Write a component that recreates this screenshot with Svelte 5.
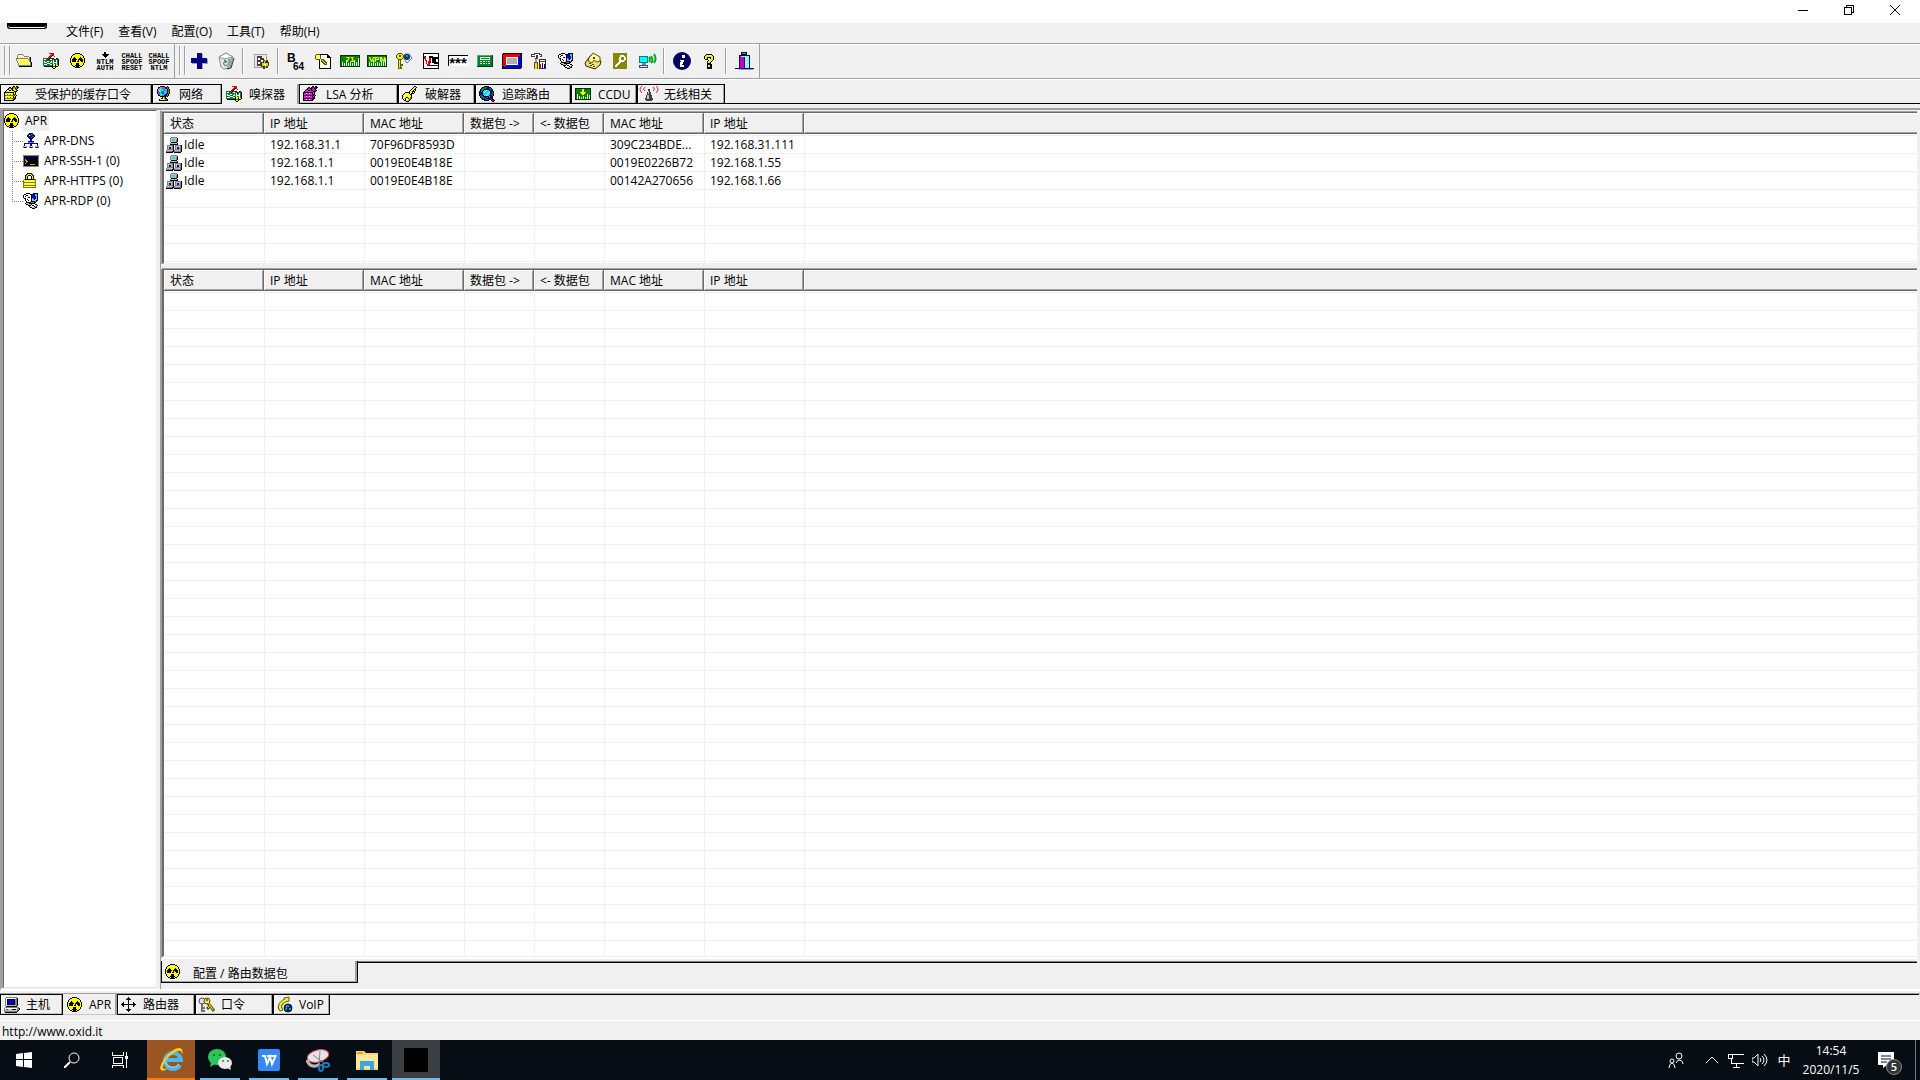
<script lang="ts">
  interface Tab {
    icon: string
    label: string
    width: number
    wide?: boolean
  }

  const menus = ['文件(F)', '查看(V)', '配置(O)', '工具(T)', '帮助(H)']

  const fileTools = ['folder', 'sniffer', 'apr', 'ntlm', 'reset', 'spoof']
  const mainTools = [
    ['plus', 'trash'],
    ['settings'],
    ['base64', 'scroll', 'hash', 'vpn', 'keys', 'vnc', 'stars', 'calc', 'rsa', 'hammer', 'rdp', 'phone', 'wpa', 'wireless'],
    ['info', 'help'],
    ['exit'],
  ]

  const tabs: Tab[] = [
    { icon: 'vault', label: '受保护的缓存口令', width: 152, wide: true },
    { icon: 'globe', label: '网络', width: 70 },
    { icon: 'sniffer', label: '嗅探器', width: 77 },
    { icon: 'lsa', label: 'LSA 分析', width: 99 },
    { icon: 'key', label: '破解器', width: 77 },
    { icon: 'trace', label: '追踪路由', width: 96 },
    { icon: 'ccdu', label: 'CCDU', width: 66 },
    { icon: 'antenna', label: '无线相关', width: 88 },
  ]

  const bottomTabs: Tab[] = [
    { icon: 'host', label: '主机', width: 63 },
    { icon: 'apr', label: 'APR', width: 54 },
    { icon: 'router', label: '路由器', width: 78 },
    { icon: 'passwords', label: '口令', width: 78 },
    { icon: 'voip', label: 'VoIP', width: 57 },
  ]

  const tree = [
    { icon: 'dns', label: 'APR-DNS' },
    { icon: 'ssh', label: 'APR-SSH-1 (0)' },
    { icon: 'lock', label: 'APR-HTTPS (0)' },
    { icon: 'rdp', label: 'APR-RDP (0)' },
  ]

  const columns = ['状态', 'IP 地址', 'MAC 地址', '数据包 ->', '<- 数据包', 'MAC 地址', 'IP 地址', '']

  const poisoned = [
    ['Idle', '192.168.31.1', '70F96DF8593D', '', '', '309C234BDE...', '192.168.31.111', ''],
    ['Idle', '192.168.1.1', '0019E0E4B18E', '', '', '0019E0226B72', '192.168.1.55', ''],
    ['Idle', '192.168.1.1', '0019E0E4B18E', '', '', '00142A270656', '192.168.1.66', ''],
  ]

  const apps = ['ie', 'wechat', 'wps', 'snip', 'explorer', 'cain']

  // one letter per pixel, see palette
  const palette: Record<string, string> = {
    k: '#000', y: '#ffff00', g: '#808080', s: '#c0c0c0', w: '#fff', c: '#00e0f0',
    b: '#0000c8', n: '#008030', r: '#e00000', o: '#808000', l: '#ffff90', d: '#303030', m: '#e020e0', p: '#700070',
  }

  const safe = [
    '.........kk.kk..',
    '.....kk.kooookk.',
    '....kookkoykok..',
    '...kkyyokyyok...',
    '..kyykkykkyyok..',
    '.kyyyyyyyykkk...',
    'kkkkkkkkkkyk....',
    'kyywyywyykyk....',
    'kyyoyyoyykok....',
    'koooooooookyk...',
    'kyywyywyykyk....',
    'kyyoyyoyykok....',
    'koooooooookk....',
    'kyywyywyykk.....',
    'kkkkkkkkkk......',
  ]

  const sprites: Record<string, string[]> = {
    apr: [
      '.....kkkkk......',
      '...kkyyyyykk....',
      '..kyyyyyyyyyk...',
      '.kyyyyyyyyyyyk..',
      '.kyykyyyyykyyk..',
      'kyykkkyyykkkyyk.',
      'kykkkkkykkkkkyk.',
      'kykkkkyykykkkyk.',
      'kykkkkykkyykkyk.',
      'kyyyyyyyyyyyyyk.',
      '.kyyyykkkyyyyk..',
      '.kyyyykkkyyyyk..',
      '..kyykkkkkyyk...',
      '...kkykkkykk....',
      '.....kkkkk......',
    ],
    idle: [
      '.....gggggg.....',
      '....gssssssk....',
      '....gscccsgk....',
      '....gscccsgk....',
      '....gsssssgk....',
      '.....kkkkkk.....',
      '....gssssssk....',
      '....kkkkkkkk....',
      '.ggggggk.ggggggk',
      '.gssssgk.gssssgk',
      '.gsbbsgk.gsbbsgk',
      '.gsbbsgk.gsbbsgk',
      '.ggggggk.ggggggk',
      'gsssssskgsssssgk',
      'ggggggkkgggggggk',
      'kkkkkkk.kkkkkkk.',
    ],
    dns: [
      '......kkkk......',
      '.....kbbnnk.....',
      '....kbwnbbbk....',
      '....kbbbbnnk....',
      '.....kbbnbk.....',
      '......kkkk......',
      '.......bb.......',
      '.......bb.......',
      '.....bbbbbb.....',
      '.....gggggg.....',
      '.bbbbbbbbbbbbbb.',
      '.b.....bb.....b.',
      '.b.....bb.....b.',
      'gssg..gssg..gssg',
      'gkkg..gkkg..gkkg',
    ],
    lock: [
      '....kkkkk.......',
      '...koyyyok......',
      '..koykkkyok.....',
      '..kyk...kyk.....',
      '..kyk...kyk.....',
      '..kyk...kyk.....',
      '.okkkkkkkkkko...',
      'oyyyyyyyyyyyo...',
      'oylllllllllyo...',
      'ooooooooooooo...',
      'oylllllllllyo...',
      'oyyyyyyyyyyyo...',
      'ooooooooooooo...',
      'oylllllllllyo...',
      'ooooooooooooo...',
    ],
    rdp: [
      '...kkkk...kkkkk.',
      '.kkwwwwkkkbbcck.',
      'kwwkkwwwkbbbcck.',
      'kwkwwwwwkbbbbck.',
      'kwwwwkkwkbbbbck.',
      '.kkwwwwwkcbbbsk.',
      '..kwkwwwkscbssk.',
      '..kwwkwwksssskk.',
      '...kwwwskkkkgk..',
      '...kkkkkgggkk...',
      '..kssskkkkkk....',
      '...kkssskwwwkk..',
      '.....kkkwkkwwsk.',
      '......kswwwksk..',
      '.......kkssskk..',
      '.........kkk....',
    ],
    host: [
      '..ggggggggggg...',
      '.gwwwwwwwwwwgk..',
      '.gwkkkkkkkkggk..',
      '.gwkbbbbbbkggk..',
      '.gwkbbbbbbkggk..',
      '.gwkbbbbbbkggk..',
      '.gwkbbbbbbkggk..',
      '.gwkkkkkkkkggk..',
      '.gssssssssssgk..',
      '..kkkkkkkkkkk...',
      '.gggggggggggggg.',
      'gwwwwwwwwwwwwggk',
      'gsnnsssskkkksggk',
      'gssssssssssssgk.',
      'gggggggggggggk..',
      '.kkkkkkkkkkkk...',
    ],
    sniffer: [
      '......rrrrr.....',
      '........rrr.....',
      '.......rrkr.....',
      '......rrk..r....',
      '.....rrk........',
      'nnnnrrknnkk..kk.',
      'nwwnrknwwnnknnnk',
      'nnnnnnnnnnwknwnk',
      'nwnnwwnnwnwnnwnk',
      'nwwwnnnwwnwwwwnk',
      'nnnnwwwnnnwnnwnk',
      'nwwwnnnwwkyynynk',
      'nnnnnnnnnkyykyyk',
      '.kkkkkkkkknnkkk.',
      '.........kyyk...',
      '..........kk....',
    ],
    folder: [
      '................',
      '..ggggg.........',
      '.glwlwlg........',
      '.gwlwlwlggggg...',
      '.glwlwlwlwlwlgk.',
      'gggggggggggglgk.',
      'glllllllllllggk.',
      'gwylylylylylwgk.',
      '.glylylylylylgk.',
      '.gwylylylylylwgk',
      '..glylylylylylgk',
      '..gwylylylylylgk',
      '..gggggggggggggk',
      '...kkkkkkkkkkkkk',
    ],
    vault: safe,
    lsa: safe.map((line) => line.replaceAll('y', 'm').replaceAll('o', 'p')),
    router: [
      '.......k........',
      '......kkk.......',
      '.....kkkkk......',
      '.......k........',
      '.......k........',
      '..k....k....k...',
      '.kk....k....kk..',
      'kkkkkkkkkkkkkkk.',
      '.kk....k....kk..',
      '..k....k....k...',
      '.......k........',
      '.......k........',
      '.....kkkkk......',
      '......kkk.......',
      '.......k........',
    ],
    key: [
      '............kk..',
      '...........kyyk.',
      '..........kylk..',
      '.........kyykk..',
      '........kylkyk..',
      '.......kyykkk...',
      '...kkkkkylkyk...',
      '..kyyyykykkk....',
      '.kylllyykk......',
      'kyllyyyyyk......',
      'kylyyyyyyk......',
      'kyyykkyyok......',
      'kyykwwkyok......',
      '.kykwwyok.......',
      '..kkyyok........',
      '....kkk.........',
    ],
    trace: [
      '.....kkkkk......',
      '...kknnnbbkk....',
      '..knnnnbbbnnk...',
      '.knnnkkkkkbnnk..',
      '.knnkccwcckbbk..',
      'kbnkccwcccckbbk.',
      'kbbkcwccccwkbnk.',
      'kbbkcccccwckbnk.',
      'kbbkccccwcckbnk.',
      'knnbkccwcckbbnk.',
      '.knnbkkkkkcbbk..',
      '.knnnbbnnkrkbk..',
      '..kbnnnbbbkrkk..',
      '...kkbbnnbbkrkk.',
      '.....kkkkk..krrk',
      '.............kk.',
    ],
    globe: [
      '....kkkkk..k....',
      '..kkccmmmkkok...',
      '..kcccmmcbkok...',
      '.kccwccmmcckok..',
      '.kcwccccmmckok..',
      '.kmcccnncccbok..',
      '.kmmcnnncccbok..',
      '.kmmccnnccbbok..',
      '..kmccccmbbok...',
      '..kkccmmbbkok...',
      '....kkkkkkok....',
      '......kyok......',
      '.....kkyokk.....',
      '...kyyyyyook....',
      '...kkkkkkkkk....',
    ],
  }

  let activeTab = $state('sniffer')
  let activeBottom = $state('apr')
</script>

{#snippet icon(name: string)}
  <svg class="icon" viewBox="0 0 16 16" width="16" height="16" aria-hidden="true">
    {#if sprites[name]}
      {#each sprites[name] as line, y (y)}
        {#each line as dot, x (x)}
          {#if dot !== '.'}<rect {x} {y} width="1" height="1" fill={palette[dot]} />{/if}
        {/each}
      {/each}
    {:else if name === 'ntlm'}
      <path d="M7-1h2v2h3L8 5 4 1h3z" fill="#000" />
      <text class="tiny" x="8" y="11">NTLM</text>
      <text class="tiny" x="8" y="17">AUTH</text>
    {:else if name === 'reset' || name === 'spoof'}
      <text class="tiny" x="8" y="5">CHALL</text>
      <text class="tiny" x="8" y="11">SPOOF</text>
      <text class="tiny" x="8" y="17">{name === 'reset' ? 'RESET' : 'NTLM'}</text>
    {:else if name === 'plus'}
      <path d="M7 1h5v5h5v5h-5v5H7v-5H1V8h6z" fill="#a0a0a0" />
      <path d="M6 0h5v5h5v5h-5v6H6v-6H0V5h6z" fill="#000080" />
    {:else if name === 'trash'}
      <g class="soft">
        <path d="M1 4l7-4 7 4-3 11-6 1-3-2z" fill="#e4e4e4" stroke="#909090" />
        <path d="M1 4l5 2 9-2-7-4z" fill="#fff" stroke="#909090" />
        <path d="M10 6l4-1-2 9-3 1z" fill="#a0a0a0" />
        <path d="M9 9a2 2 0 1 0 0 3M6 7l2 1-1 2" fill="none" stroke="#008030" />
        <path d="M16 5l-3 10-4 1" fill="none" stroke="#303030" />
      </g>
    {:else if name === 'settings'}
      <path d="M1 1h12v13H1z" fill="#e8e8e8" stroke="#a0a0a0" />
      <path d="M4 3h5v2h2v3h2v3H9v2H4z" fill="#404040" />
      <path d="M5 5h2v2H5zM8 7h2v2H8zM5 9h2v2H5z" fill="#fff" />
      <path d="M8 9h2V7h2v2h1V7h2v2h1v4h-1v2h-2v-1h-1v2h-2v-2H8z" fill="#403800" />
      <path d="M9 10h2V8h1v2h3v3h-2v1h-1v-1H9z" fill="#e8d800" />
      <path d="M11 11h2v1h-2z" fill="#fff" />
    {:else if name === 'base64'}
      <text class="bee" x="-1" y="9">B</text>
      <text class="sixty" x="5" y="17">64</text>
    {:else if name === 'scroll'}
      <path d="M4 1h9v1h1v1h1v1h1v12H4z" fill="#000" />
      <path d="M5 2h7v3h3v10H5z" fill="#fff" />
      <path d="M6 6h2v1h1v1h1v1h1v2H9v-1H8V9H7V8H6z" fill="#e8e000" stroke="#605800" />
      <path d="M1 1h4v1h1v4H5v1H1V6H0V2h1z" fill="#605800" />
      <path d="M1 2h4v4H1z" fill="#ffff60" />
    {:else if name === 'hash' || name === 'vpn'}
      <path d="M-2 2h20v12H-2z" fill="#008000" />
      <path d="M-2 2h20v1H-2zM-2 13h20v1H-2zM-2 2h1v12h-1zM17 2h1v12h-1z" fill="#003800" />
      <path d="M0 9h1v4H0zM2 10h1v3H2zM4 7h1v6H4zM6 10h1v3H6zM8 9h1v4H8zM10 10h1v3h-1zM12 7h1v6h-1zM14 9h1v4h-1zM16 5h1v8h-1z" fill="#e0ffe0" />
      <text class="label" x="8" y="9">{name === 'vpn' ? 'VPN' : '71'}</text>
    {:else if name === 'keys'}
      <path d="M2 7h3v9H2zM5 11h2v2H5zM5 14h1v2H5z" fill="#606000" />
      <path d="M3 6h1v9H3z" fill="#f0e800" />
      <path d="M2 0h4v1h1v1h1v3H7v1H6v1H2V6H1V5H0V2h1V1h1z" fill="#505000" />
      <path d="M2 1h4v1h1v3H6v1H2V5H1V2h1z" fill="#f0f000" />
      <path d="M3 2h2v2H3z" fill="#505000" />
      <g class="soft">
        <path d="M9 1h4l3 4-5 5-3-4z" fill="#f4f4f4" stroke="#707070" />
        <circle cx="11" cy="4" r="3" fill="#003098" />
        <path d="M10 2h2v2h-2z" fill="#30a040" />
      </g>
    {:else if name === 'vnc'}
      <path d="M0 0h16v16H0z" fill="#000" />
      <path d="M1 1h14v14H1z" fill="#fff" />
      <path d="M6 3h4v1h1v6H9V5H8v5H6zM11 4h4v2h-2v3h2v2h-4z" fill="#000" />
      <path d="M1 3h2v4h1v4h1V8h1V5h2v4H7v4H4v-2H3V8H2V6H1z" fill="#e00000" />
      <path d="M6 12h9v1H6z" fill="#000080" />
    {:else if name === 'stars'}
      <path d="M-2 2h20v11H-2z" fill="#fff" />
      <path d="M-2 2h20v1H-1v10h-1z" fill="#000" />
      <text class="stars" x="8" y="15">***</text>
    {:else if name === 'calc'}
      <path d="M0 2h16v12H0z" fill="#003818" />
      <path d="M0 2h15v11H0z" fill="#50b070" />
      <path d="M1 3h14v10H1z" fill="#008030" />
      <path d="M3 4h10v3H3z" fill="#e0ffe0" />
      <path d="M4 5h8v1H4z" fill="#008030" />
      <path d="M3 8h2v1H3zM6 8h2v1H6zM9 8h1v1H9zM11 8h2v1h-2zM3 10h2v1H3zM6 10h2v1H6zM9 10h1v1H9zM11 10h2v1h-2z" fill="#e0e8c0" />
    {:else if name === 'rsa'}
      <rect x="-2" y="0" width="20" height="16" rx="2" fill="#000" />
      <path d="M-1 13V2h1V1h16v1l-2 2H3v7l-3 3z" fill="#f00000" />
      <path d="M17 2v12h-1v1H0v-1l3-3h10V4z" fill="#0000e0" />
      <path d="M2 4h12v8H2z" fill="#fff" />
      <path d="M3 5h10v6H3z" fill="#b0b0b0" />
    {:else if name === 'hammer'}
      <path d="M0 1h3V0h6v1h2v3H9V3H7v3H4V4H0z" fill="#404040" />
      <path d="M1 2h3V1h4v1h2v1H7V2H5v3H4V3H1z" fill="#f0f0f0" />
      <path d="M4 6h2v3H4z" fill="#a0a0a0" />
      <path d="M3 9h4v7H3z" fill="#605800" />
      <path d="M4 10h2v6H4z" fill="#f0e000" />
      <path d="M8 6h7v10H8z" fill="#303030" />
      <path d="M9 7h5v8H9z" fill="#fff" />
      <path d="M9 8h5v1H9zM9 11h1v4H9z" fill="#d00000" />
      <path d="M11 10h1v5h-1zM13 11h1v4h-1z" fill="#000080" />
    {:else if name === 'phone'}
      <g class="soft">
        <path d="M0 10l6-8 10 6-1 4-5 4-9-3z" fill="#e8e070" stroke="#302800" />
        <path d="M4 5l4-5 7 4v4l-3 1-3-2-2 3-4-2z" fill="#fffca0" stroke="#605800" />
        <path d="M4 10h2v1H4zM7 11h2v1H7zM5 12h2v1H5zM8 13h2v1H8zM8 4h2v2H8z" fill="#504800" />
      </g>
    {:else if name === 'wpa'}
      <path d="M1 0h14v16H1z" fill="#888800" />
      <path d="M8 2h4v1h1v1h1v3h-1v1h-1v1H9v1H8v1H7v1H6v1H5v1H3v-2h1v-1h1v-1h1V9h1V4h1zM9 4v3h3V4z" fill="#fff" fill-rule="evenodd" />
    {:else if name === 'wireless'}
      <path d="M0 3h9v7H0z" fill="#008080" />
      <path d="M1 4h7v5H1z" fill="#00ffff" />
      <path d="M3 10h4v2H3z" fill="#8080b0" />
      <path d="M0 12h9v3H0z" fill="#4040a0" />
      <path d="M1 13h7v1H1z" fill="#e8e8ff" />
      <path class="soft" d="M10 4q2 2 0 5M12 3q3 4 0 7M15 1q3 5 0 9" fill="none" stroke="#00a820" stroke-width="2" />
    {:else if name === 'info'}
      <circle class="soft" cx="8" cy="8" r="9" fill="#000060" />
      <path d="M8 2h3v3H8zM6 7h4v1L8 12h2v1l-1 1H6v-3l1-3H5z" fill="#fff" />
    {:else if name === 'help'}
      <path d="M5 1h6v1h1v1h1v4h-1v1h-1v1h-1v2h1v5H6V8h1V7h2V5H7v2H4V6H3V3h1V2h1z" fill="#000" />
      <path d="M5 2h6v1h1v4h-1v1h-1v1H9v1H7V8h1V7h1V6h1V4H6v2H4V3h1zM7 12h2v2H7z" fill="#f0f000" />
    {:else if name === 'exit'}
      <path d="M-1 15h4V2h11v13h4v1H-1z" fill="#000080" />
      <path d="M4 3h9v12H4z" fill="#80ffff" />
      <path d="M4 3l5 2v9l-5 2z" fill="#c000c0" />
      <path d="M8 4h1v11H8z" fill="#500050" />
      <path d="M10 5h1v1h-1zM12 7h1v1h-1zM10 9h1v1h-1zM12 11h1v1h-1z" fill="#fff" />
      <path d="M5-1h6v3H5z" fill="#000" />
      <path d="M6 0h4v1H6z" fill="#00d040" />
      <path d="M3 16h14v1H3z" fill="#a0a0a0" />
    {:else if name === 'ccdu'}
      <path d="M0 2h16v12H0z" fill="#003000" />
      <path d="M1 3h14v10H1z" fill="#008000" />
      <path d="M2 8h1v5H2zM4 10h1v3H4zM6 11h1v2H6zM8 10h1v3H8zM10 11h1v2h-1zM12 8h1v5h-1zM14 9h1v4h-1z" fill="#e0ffe0" />
      <path d="M7 3h2v3h2v1h-1v1H9v1H7V8H6V7H5V6h2z" fill="#ffff00" />
    {:else if name === 'antenna'}
      <path d="M7 3h2v3h1v3h1v3h1v2h-1v1H5v-1H4v-2h1V9h1V6h1z" fill="#404040" />
      <path d="M7 5h1v3H7zM6 9h2v4H6z" fill="#c8c8c8" />
      <path class="soft" d="M4 1q-3 2 0 4M1 0q-4 3 0 7M12 1q3 2 0 4M15 0q4 3 0 7" fill="none" stroke="#e02020" />
    {:else if name === 'ssh'}
      <path d="M0 2h16v12H0z" fill="#808080" />
      <path d="M1 3h14v10H1z" fill="#000" />
      <path d="M1 3h14v1H1z" fill="#000080" />
      <path d="M2 6h1v1h1v1h1v1H4v1H3v1H2v-1h1V8H2zM7 11h5v1H7z" fill="#c0b000" />
    {:else if name === 'passwords'}
      <g class="soft">
        <path d="M3 6v9M3 11h3M3 14h3" stroke="#707070" stroke-width="2" />
        <circle cx="3" cy="4" r="3" fill="#e0e0e0" stroke="#505050" />
        <path d="M9 6l6 8M11 9l-3 3" stroke="#605800" stroke-width="3" />
        <circle cx="8" cy="4" r="3" fill="#f0e840" stroke="#504800" />
        <path d="M9 5l5 8M11 9l-2 2" stroke="#f0e840" />
        <circle cx="8" cy="3" r="1" fill="#504800" />
      </g>
    {:else if name === 'voip'}
      <g class="soft">
        <path d="M3 12Q2 6 9 3" fill="none" stroke="#606000" stroke-width="4" />
        <path d="M1 10l3-1 2 4-3 1zM7 1l5-1v4l-3 1z" fill="#f0f040" stroke="#606000" />
        <path d="M3 11Q2 6 9 3" fill="none" stroke="#f0f040" stroke-width="2" />
        <circle cx="11" cy="11" r="4" fill="#0020a0" stroke="#001040" />
        <path d="M9 8h3v2h-2v3H8zM12 11h2v2h-2z" fill="#20a040" />
      </g>
    {/if}
  </svg>
{/snippet}

{#snippet tab(item: Tab, active: boolean, pick: () => void)}
  <button class="tab" class:active class:wide={item.wide} style:width="{item.width}px" role="tab" aria-selected={active} onclick={pick}>
    {@render icon(item.icon)}
    <span>{item.label}</span>
  </button>
{/snippet}

{#snippet grid(rows: string[][])}
  <div class="grid">
    <table>
      <colgroup>
        <col class="c100" /><col class="c100" /><col class="c100" /><col class="c70" /><col class="c70" /><col class="c100" /><col class="c100" /><col />
      </colgroup>
      <thead>
        <tr>
          {#each columns as title, n (n)}<th><div class="head">{title}</div></th>{/each}
        </tr>
      </thead>
      <tbody>
        {#each rows as row, r (r)}
          <tr class="row">
            {#each row as cell, c (c)}
              <td>
                {#if c === 0}<div class="state">{@render icon('idle')}{cell}</div>{:else}{cell}{/if}
              </td>
            {/each}
          </tr>
        {/each}
        <tr class="rest">
          {#each columns as _, n (n)}<td></td>{/each}
        </tr>
      </tbody>
    </table>
  </div>
{/snippet}

<div class="window">
  <header class="titlebar">
    <button aria-label="最小化"><svg viewBox="0 0 10 10" width="10" height="10"><path d="M0 5h10v1H0z" fill="#000" /></svg></button>
    <button aria-label="还原">
      <svg viewBox="0 0 10 10" width="10" height="10"><path d="M0 2h8v8H0zM1 3v6h6V3zM2 0h8v8H8V7h1V1H3v1H2z" fill="#000" fill-rule="evenodd" /></svg>
    </button>
    <button aria-label="关闭"><svg viewBox="0 0 10 10" width="10" height="10"><path d="M0 0l10 10M10 0L0 10" stroke="#000" /></svg></button>
  </header>

  <nav class="menubar">
    <div class="badge"></div>
    {#each menus as menu (menu)}<button>{menu}</button>{/each}
  </nav>

  <div class="toolbars">
    <div class="toolbar">
      <span class="grip"></span>
      {#each fileTools as name (name)}<button class="tool" aria-label={name}>{@render icon(name)}</button>{/each}
    </div>
    <div class="toolbar">
      <span class="grip"></span>
      {#each mainTools as group, g (g)}
        {#if g > 0}<span class="sep"></span>{/if}
        {#each group as name (name)}<button class="tool" aria-label={name}>{@render icon(name)}</button>{/each}
      {/each}
    </div>
  </div>

  <div class="tabs top" role="tablist">
    {#each tabs as item (item.icon)}{@render tab(item, activeTab === item.icon, () => (activeTab = item.icon))}{/each}
    <span class="tail"></span>
  </div>

  <main>
    <aside>
      <div class="root">{@render icon('apr')}<span>APR</span></div>
      <ul>
        {#each tree as node (node.label)}
          <li>{@render icon(node.icon)}<span>{node.label}</span></li>
        {/each}
      </ul>
    </aside>
    <section class="panel">
      <div class="upper">{@render grid(poisoned)}</div>
      <div class="lower">{@render grid([])}</div>
      <div class="tabs sheet">
        <button class="tab active">{@render icon('apr')}<span>配置 / 路由数据包</span></button>
        <span class="tail"></span>
      </div>
    </section>
  </main>

  <div class="tabs bottom" role="tablist">
    {#each bottomTabs as item (item.icon)}{@render tab(item, activeBottom === item.icon, () => (activeBottom = item.icon))}{/each}
    <span class="tail"></span>
  </div>

  <footer class="status">http://www.oxid.it</footer>

  <div class="taskbar">
    <button class="sys" aria-label="开始">
      <svg viewBox="0 0 16 16" width="16" height="16"><path d="M0 2l7-1v6H0zM8 1l8-1v7H8zM0 8h7v7l-7-1zM8 8h8v8l-8-1z" fill="#fff" /></svg>
    </button>
    <button class="sys" aria-label="搜索">
      <svg viewBox="0 0 16 16" width="16" height="16"><circle cx="10" cy="6" r="5" fill="none" stroke="#fff" /><path d="M6 10l-6 6" stroke="#fff" stroke-width="2" /></svg>
    </button>
    <button class="sys" aria-label="任务视图">
      <svg viewBox="0 0 16 16" width="16" height="16" shape-rendering="crispEdges"><path d="M0 0v3h11V0M1 5h9v6H1zM0 16v-3h11v3M14 0v16" fill="none" stroke="#fff" /><path d="M13 4h3v3h-3z" fill="#fff" /></svg>
    </button>
    {#each apps as app (app)}
      <button class="app {app}" aria-label={app}>
        <svg viewBox="0 0 24 24" width="24" height="24">
          {#if app === 'ie'}
            <path d="M21 17a8 8 0 1 1 1-5H8" fill="none" stroke="#49b9ee" stroke-width="4" />
            <path d="M20 16a8 8 0 0 1-14-2" fill="none" stroke="#a5e2fa" />
            <path d="M2 22C-2 18 12 0 20 0q5 0 3 7 0-5-4-4C12 5 3 15 4 20q1 2 5 0-4 4-7 2z" fill="#ffcc28" />
          {:else if app === 'wechat'}
            <ellipse cx="9" cy="9" rx="9" ry="8" fill="#2dc45c" />
            <path d="M3 14l-1 5 5-3z" fill="#2dc45c" />
            <ellipse cx="17" cy="15" rx="7" ry="6" fill="#ececec" />
            <path d="M19 20l4 2-1-4z" fill="#ececec" />
            <circle cx="6" cy="7" r="1" fill="#145c2c" /><circle cx="12" cy="7" r="1" fill="#145c2c" />
            <circle cx="15" cy="13" r="1" fill="#666" /><circle cx="20" cy="13" r="1" fill="#666" />
          {:else if app === 'wps'}
            <rect x="1" y="1" width="22" height="22" rx="2" fill="#3389f6" />
            <path d="M5 8h3l2 8 3-7 2 7 4-9M10 8h9" fill="none" stroke="#fff" stroke-width="2" />
          {:else if app === 'snip'}
            <ellipse cx="12" cy="8" rx="11" ry="6" fill="#e4e4e8" stroke="#d84848" transform="rotate(-14 12 8)" />
            <path d="M1 12q2 7 9 6l4-2" fill="none" stroke="#b8b8bc" stroke-width="3" />
            <path d="M7 7l11 8M14 3l-1 13" stroke="#888" />
            <ellipse cx="15" cy="20" rx="2" ry="3" fill="none" stroke="#2078b8" stroke-width="2" />
            <ellipse cx="20" cy="17" rx="3" ry="2" fill="none" stroke="#2078b8" stroke-width="2" />
          {:else if app === 'explorer'}
            <path d="M1 3h8l2 2h12v17H1z" fill="#f8d775" />
            <path d="M1 7h22v13H1z" fill="#ffe79a" />
            <path d="M2 4h6v2H2z" fill="#e0a830" />
            <path d="M5 13h14v9h-4v-4H9v4H5z" fill="#3aa5e0" />
          {:else}
            <path d="M0 0h24v24H0z" fill="#000" />
          {/if}
        </svg>
      </button>
    {/each}
    <div class="tray">
      <button class="people" aria-label="人脉">
        <svg viewBox="0 0 16 16" width="16" height="16"><circle cx="11" cy="4" r="3" /><circle cx="4" cy="9" r="2" /><path d="M1 16q0-4 3-5 3 1 3 5M8 11q2-4 4-3 3 1 3 4" /></svg>
      </button>
      <button aria-label="显示隐藏的图标"><svg viewBox="0 0 16 16" width="16" height="16"><path d="M2 11l6-6 6 6" /></svg></button>
      <button aria-label="网络">
        <svg viewBox="0 0 16 16" width="16" height="16" shape-rendering="crispEdges"><path d="M4 2h12v9H3V7M0 2h4v4H0zM8 11v4M5 15h7" /></svg>
      </button>
      <button aria-label="音量"><svg viewBox="0 0 16 16" width="16" height="16"><path d="M0 6h2l4-4v12l-4-4H0zM8 6q2 2 0 4M10 4q4 4 0 8M12 2q6 6 0 12" /></svg></button>
      <button class="ime" aria-label="输入法">中</button>
      <button class="clock"><span>14:54</span><span>2020/11/5</span></button>
      <button class="notes" aria-label="通知">
        <svg viewBox="0 0 16 16" width="16" height="16"><path d="M0 0h16v13H9l-4 3v-3H0z" class="solid" /><path d="M3 4h10M3 7h10M3 10h6" class="dark" /></svg>
        <span class="count">5</span>
      </button>
      <span class="desktop"></span>
    </div>
  </div>
</div>

<style>
  :global(body) { background: #f0f0f0; }
  * { box-sizing: border-box; }
  button { margin: 0; padding: 0; border: 0; background: transparent; font: inherit; color: inherit; white-space: nowrap; }

  .window { display: flex; flex-direction: column; height: 100vh; background: #f0f0f0; color: #000; font: 12px/16px "Open Sans", "Noto Sans CJK SC", sans-serif; overflow: hidden; }
  .icon { flex: none; display: block; overflow: visible; shape-rendering: crispEdges; }
  .soft { shape-rendering: geometricPrecision; }
  .tiny { font: bold 7px "Liberation Mono", monospace; text-anchor: middle; }
  .label { font: bold 8px "Liberation Sans", sans-serif; text-anchor: middle; fill: #ffff40; }
  .stars { font: bold 15px "Liberation Sans", sans-serif; text-anchor: middle; }
  .bee { font: bold 12px "Liberation Sans", sans-serif; }
  .sixty { font: bold 10px "Liberation Sans", sans-serif; }

  .titlebar { flex: none; display: flex; justify-content: flex-end; height: 23px; padding: 0 2px 3px 0; background: #fff; }
  .titlebar button { display: flex; align-items: center; justify-content: center; width: 46px; }

  .menubar { flex: none; display: flex; align-items: center; height: 20px; gap: 15px; padding: 0 0 2px 7px; }
  .badge { align-self: flex-start; width: 40px; height: 6px; margin-right: 4px; border: 1px solid #000; border-top: 0; border-radius: 0 0 3px 3px; background: #000; box-shadow: inset 0 -1px #fff; }

  .toolbars { flex: none; display: flex; height: 37px; border-top: 1px solid #a0a0a0; border-bottom: 1px solid #fff; box-shadow: inset 0 1px #fff, inset 0 -1px #a0a0a0; }
  .toolbar { display: flex; align-items: center; padding: 0 2px 2px 4px; border-right: 1px solid #a0a0a0; }
  .grip { width: 6px; height: 29px; border: 1px solid #a0a0a0; border-width: 0 1px; box-shadow: inset 1px 0 #fff, 1px 0 #fff; }
  .tool { display: flex; align-items: center; justify-content: center; width: 27px; height: 32px; }
  .sep { width: 8px; height: 26px; background: linear-gradient(90deg, transparent 3px, #a0a0a0 3px 4px, #fff 4px 5px, transparent 5px); }

  .tabs { flex: none; display: flex; height: 20px; }
  .tab { display: flex; align-items: center; gap: 7px; padding-left: 3px; border: 1px solid #000; box-shadow: inset -1px 0 #a0a0a0, inset 1px 0 #fff, inset 0 -1px #c8c8c8; }
  .tab.wide { gap: 15px; }
  .tail { flex: 1; }
  .top { margin-top: 4px; }
  .top .tab span { padding-top: 2px; }
  .top .tail { border-bottom: 1px solid #000; }
  .top .active { padding-left: 4px; border: 0; border-right: 2px solid #a0a0a0; box-shadow: none; }
  .bottom { height: 22px; padding-right: 1px; border-top: 1px solid #a0a0a0; }
  .bottom .tab { gap: 6px; }
  .bottom .tail { border-top: 1px solid #000; }
  .bottom .active { padding-left: 4px; border: 0; border-right: 2px solid #a0a0a0; box-shadow: inset 0 -1px #c8c8c8; }

  main { flex: 1; display: flex; min-height: 0; margin: 4px 0 2px; border-top: 2px solid #a0a0a0; border-left: 1px solid #a0a0a0; border-bottom: 2px solid #fff; }
  aside { flex: none; width: 154px; margin-bottom: 1px; border: 1px solid #696969; border-left: 1px solid #696969; border-right-color: #f0f0f0; border-bottom-color: #e3e3e3; box-shadow: -2px 0 #a0a0a0; margin-left: 2px; background: #fff; }
  .root { display: flex; align-items: center; height: 20px; gap: 3px; }
  .root span { padding: 2px; background: #f0f0f0; }
  ul { margin: 0 0 0 8px; padding: 0; list-style: none; }
  li { display: flex; align-items: center; height: 20px; gap: 5px; padding-left: 11px; background: repeating-linear-gradient(#808080 0 1px, transparent 1px 2px) 0 0 / 1px 100% no-repeat, repeating-linear-gradient(90deg, #808080 0 1px, transparent 1px 2px) 0 10px / 11px 1px no-repeat; }
  li:last-child { background-size: 1px 10px, 11px 1px; }

  .panel { flex: 1; display: flex; flex-direction: column; min-width: 0; margin-left: 3px; padding: 1px 3px 0 0; border-left: 1px solid #a0a0a0; }
  .upper, .lower { display: flex; border-left: 1px solid #a0a0a0; }
  .upper { flex: none; height: 153px; border-top: 1px solid #a0a0a0; }
  .lower { flex: 1; min-height: 0; margin-top: 5px; border-bottom: 2px solid #fff; }
  .grid { flex: 1; min-width: 0; border: 1px solid #696969; border-right: 0; border-bottom: 1px solid #f0f0f0; border-left: 2px solid #696969; box-shadow: 0 -1px #a0a0a0; background: repeating-linear-gradient(#f0f0f0 0 1px, #fff 1px 18px) 0 22px no-repeat #fff; overflow: hidden; }
  table { width: 100%; height: 100%; border-collapse: collapse; table-layout: fixed; }
  .c100 { width: 100px; }
  .c70 { width: 70px; }
  th { height: 22px; padding: 0; font-weight: 400; text-align: left; vertical-align: top; }
  .head { height: 21px; padding: 3px 6px 0; line-height: 16px; background: #f0f0f0; box-shadow: inset -1px -1px #696969, inset 1px 1px #fff, inset -2px -2px #a0a0a0; white-space: nowrap; }
  th:last-child .head { box-shadow: inset 0 -1px #696969, inset 1px 1px #fff, inset 0 -2px #a0a0a0; }
  td { padding: 1px 6px 0; box-shadow: inset 1px 0 #f0f0f0; white-space: nowrap; overflow: hidden; }
  td:first-child { padding-left: 2px; box-shadow: none; }
  .row td { height: 18px; }
  .state { display: flex; align-items: center; gap: 2px; height: 17px; }

  .sheet { height: 28px; margin-top: 2px; align-items: flex-start; }
  .sheet .tab { width: 197px; height: 22px; gap: 12px; border-width: 0 1px 1px; box-shadow: inset -2px 0 #a0a0a0, inset 0 -1px #a0a0a0; }
  .sheet .tab span { padding-top: 4px; }
  .sheet .tail { height: 2px; border-top: 1px solid #808080; box-shadow: inset 0 1px #000; }

  .status { flex: none; height: 20px; margin-top: 5px; padding: 3px 2px 0; border-top: 1px solid #fff; line-height: 16px; }

  .taskbar { flex: none; display: flex; height: 40px; background: #060d15; color: #fff; }
  .taskbar button { display: flex; align-items: center; justify-content: center; }
  .sys { width: 48px; }
  .sys:nth-child(3) { margin-right: 3px; }
  .app { width: 49px; background: linear-gradient(#76b9ed, #76b9ed) center bottom / 40px 2px no-repeat; }
  .app.ie { width: 48px; background: linear-gradient(#ff7a10, #ff7a10) center bottom / 100% 2px no-repeat #9b5523; }
  .app.cain { width: 48px; margin-left: 1px; background: linear-gradient(#76b9ed, #76b9ed) center bottom / 100% 2px no-repeat #3b3e43; }
  .tray { display: flex; margin-left: auto; }
  .tray button { width: 24px; }
  .tray svg { fill: none; stroke: #fff; }
  .tray .people { margin-right: 12px; }
  .tray .ime { font-size: 13px; }
  .tray .clock { flex-direction: column; gap: 3px; width: 70px; }
  .tray .notes { position: relative; width: 40px; }
  .tray .solid { fill: #fff; stroke: none; }
  .tray .dark { stroke: #060d15; }
  .count { position: absolute; right: 4px; bottom: 5px; width: 16px; height: 16px; border: 1px solid #888; border-radius: 50%; background: #333; font-size: 11px; line-height: 14px; font-weight: 600; }
  .desktop { width: 5px; margin-left: 9px; border-left: 1px solid #777; }
</style>
